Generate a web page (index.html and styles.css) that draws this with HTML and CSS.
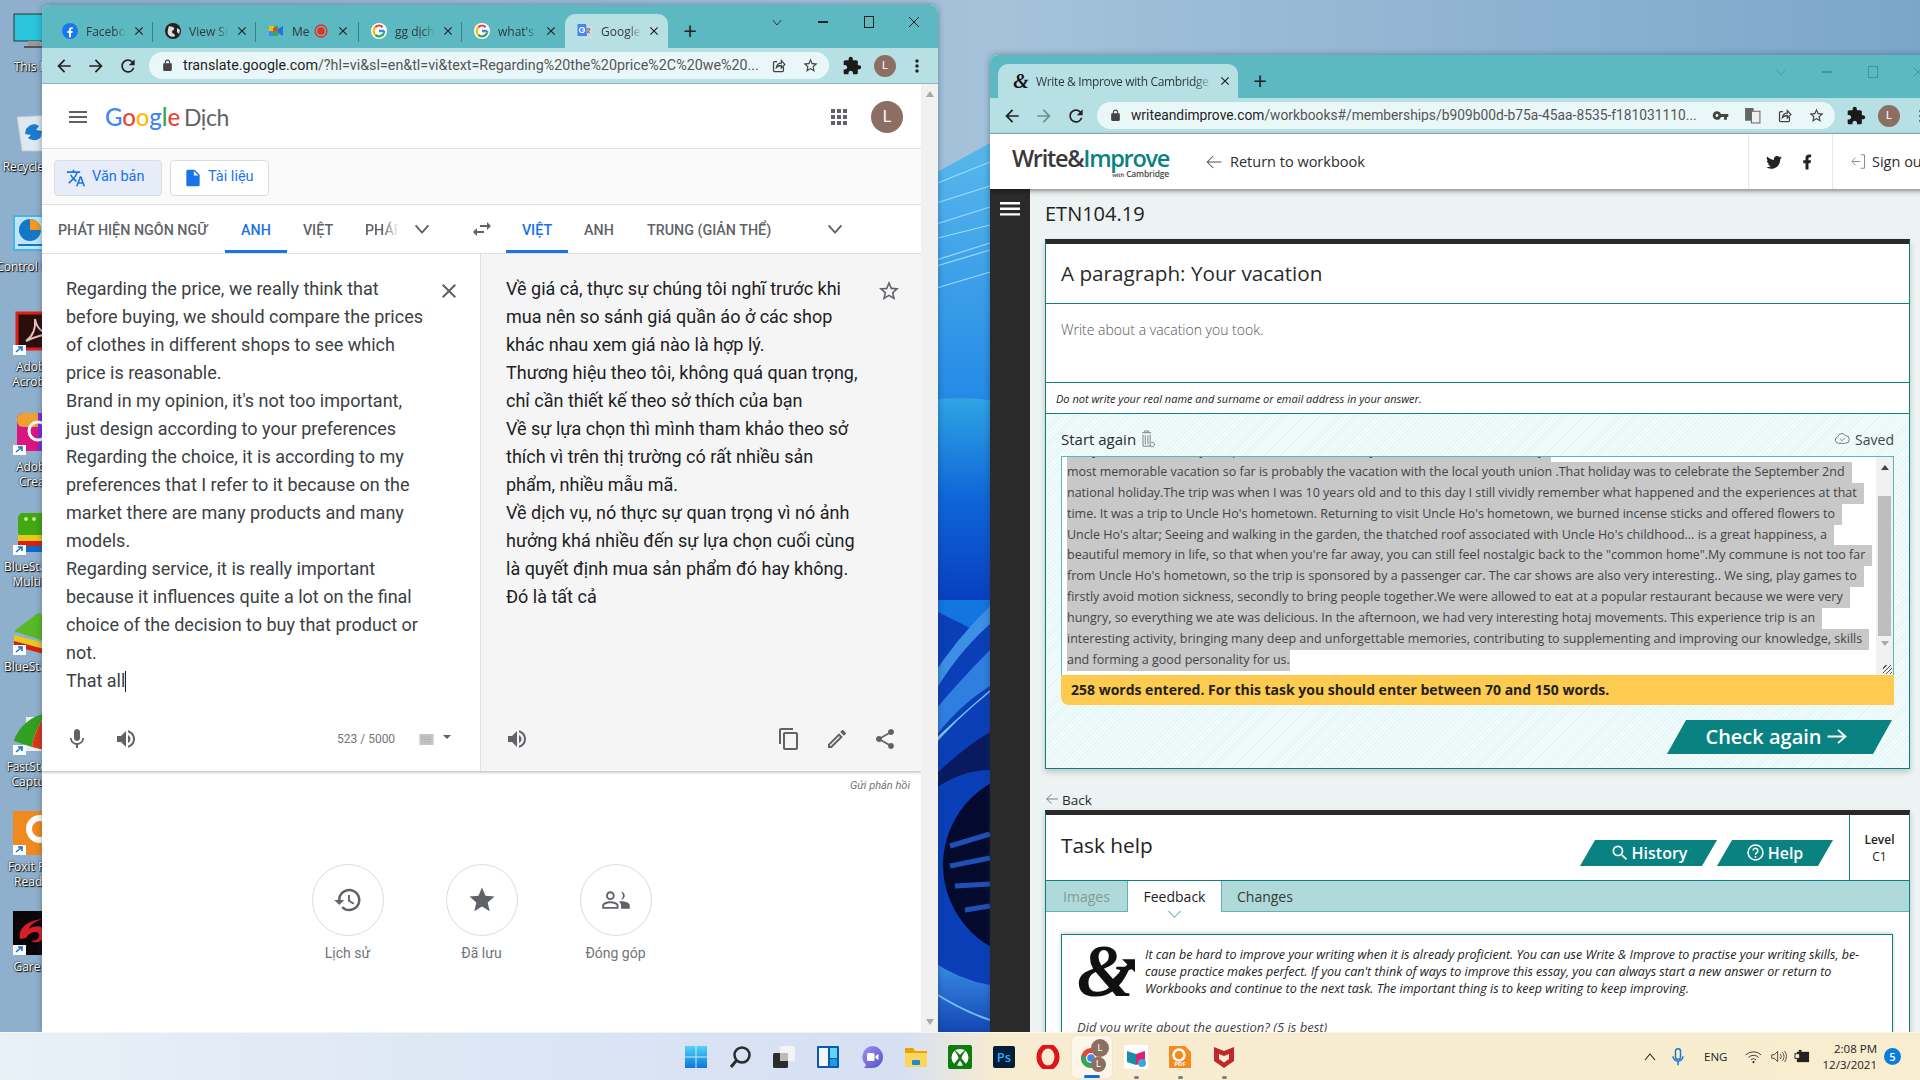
FILE: index.html
```html
<!DOCTYPE html>
<html lang="vi">
<head>
<meta charset="utf-8">
<title>Desktop</title>
<link rel="stylesheet" href="styles.css">
</head>
<body>
<svg class="defs" width="0" height="0" aria-hidden="true">
  <defs>
    <linearGradient id="gStart" x1="0" y1="0" x2="0" y2="1"><stop offset="0" stop-color="#4fd4fa"/><stop offset="1" stop-color="#0a78d4"/></linearGradient>
    <linearGradient id="gChat" x1="0" y1="0" x2="1" y2="1"><stop offset="0" stop-color="#a58cf0"/><stop offset="1" stop-color="#4f55c8"/></linearGradient>
    <linearGradient id="wpBlue1" x1="0" y1="0" x2="0" y2="1"><stop offset="0" stop-color="#58b8ec"/><stop offset=".35" stop-color="#1880e4"/><stop offset="1" stop-color="#0456d8"/></linearGradient>
    <linearGradient id="wpBlue2" x1="0" y1="0" x2="0" y2="1"><stop offset="0" stop-color="#2fa4e4"/><stop offset=".5" stop-color="#0e66d8"/><stop offset="1" stop-color="#083fc0"/></linearGradient>
    <linearGradient id="wpBlue3" x1="0" y1="0" x2="0" y2="1"><stop offset="0" stop-color="#3a8ee6"/><stop offset="1" stop-color="#0f3fae"/></linearGradient>
    <symbol id="i-back" viewBox="0 0 24 24"><path d="M20 11H7.83l5.59-5.59L12 4l-8 8 8 8 1.41-1.41L7.83 13H20v-2z"/></symbol>
    <symbol id="i-forward" viewBox="0 0 24 24"><path d="M12 4l-1.41 1.41L16.17 11H4v2h12.17l-5.58 5.59L12 20l8-8z"/></symbol>
    <symbol id="i-reload" viewBox="0 0 24 24"><path d="M17.65 6.35A7.958 7.958 0 0012 4c-4.42 0-7.99 3.58-7.99 8s3.57 8 7.99 8c3.73 0 6.84-2.55 7.73-6h-2.08A5.99 5.99 0 0112 18c-3.31 0-6-2.69-6-6s2.69-6 6-6c1.66 0 3.14.69 4.22 1.78L13 11h7V4l-2.35 2.35z"/></symbol>
    <symbol id="i-lock" viewBox="0 0 24 24"><path d="M18 8h-1V6c0-2.76-2.24-5-5-5S7 3.24 7 6v2H6c-1.1 0-2 .9-2 2v10c0 1.1.9 2 2 2h12c1.1 0 2-.9 2-2V10c0-1.1-.9-2-2-2zM9 6c0-1.66 1.34-3 3-3s3 1.34 3 3v2H9V6z"/></symbol>
    <symbol id="i-star-o" viewBox="0 0 24 24"><path d="M22 9.24l-7.19-.62L12 2 9.19 8.63 2 9.24l5.46 4.73L5.82 21 12 17.27 18.18 21l-1.63-7.03L22 9.24zM12 15.4l-3.76 2.27 1-4.28-3.32-2.88 4.38-.38L12 6.1l1.71 4.04 4.38.38-3.32 2.88 1 4.28L12 15.4z"/></symbol>
    <symbol id="i-star" viewBox="0 0 24 24"><path d="M12 17.27L18.18 21l-1.64-7.03L22 9.24l-7.19-.61L12 2 9.19 8.63 2 9.24l5.46 4.73L5.82 21z"/></symbol>
    <symbol id="i-puzzle" viewBox="0 0 24 24"><path d="M20.5 11H19V7c0-1.1-.9-2-2-2h-4V3.5C13 2.12 11.88 1 10.5 1S8 2.12 8 3.5V5H4c-1.1 0-1.99.9-1.99 2v3.8H3.5c1.49 0 2.7 1.21 2.7 2.7s-1.21 2.7-2.7 2.7H2V20c0 1.1.9 2 2 2h3.8v-1.5c0-1.49 1.21-2.7 2.7-2.7 1.49 0 2.7 1.21 2.7 2.7V22H17c1.1 0 2-.9 2-2v-4h1.5c1.38 0 2.5-1.12 2.5-2.5S21.88 11 20.5 11z"/></symbol>
    <symbol id="i-dots" viewBox="0 0 24 24"><path d="M12 8c1.1 0 2-.9 2-2s-.9-2-2-2-2 .9-2 2 .9 2 2 2zm0 2c-1.1 0-2 .9-2 2s.9 2 2 2 2-.9 2-2-.9-2-2-2zm0 6c-1.1 0-2 .9-2 2s.9 2 2 2 2-.9 2-2-.9-2-2-2z"/></symbol>
    <symbol id="i-share-box" viewBox="0 0 24 24"><path fill="none" stroke="currentColor" stroke-width="1.8" d="M19 14v5a1.5 1.5 0 01-1.5 1.5h-11A1.5 1.5 0 015 19V8a1.5 1.5 0 011.5-1.5H10M9 15c.5-4 3-6.5 7-6.5V5l5 5.5-5 5V12c-3 0-5 1-7 3z"/></symbol>
    <symbol id="i-menu" viewBox="0 0 24 24"><path d="M3 18h18v-2H3v2zm0-5h18v-2H3v2zm0-7v2h18V6H3z"/></symbol>
    <symbol id="i-apps" viewBox="0 0 24 24"><path d="M4 8h4V4H4v4zm6 12h4v-4h-4v4zm-6 0h4v-4H4v4zm0-6h4v-4H4v4zm6 0h4v-4h-4v4zm6-10v4h4V4h-4zm-6 4h4V4h-4v4zm6 6h4v-4h-4v4zm0 6h4v-4h-4v4z"/></symbol>
    <symbol id="i-translate" viewBox="0 0 24 24"><path d="M12.87 15.07l-2.54-2.51.03-.03c1.74-1.94 2.98-4.17 3.71-6.53H17V4h-7V2H8v2H1v1.99h11.17C11.5 7.92 10.44 9.75 9 11.35 8.07 10.32 7.3 9.19 6.69 8h-2c.73 1.63 1.73 3.17 2.98 4.56l-5.09 5.02L4 19l5-5 3.11 3.11.76-2.04zM18.5 10h-2L12 22h2l1.12-3h4.75L21 22h2l-4.5-12zm-2.62 7l1.62-4.33L19.12 17h-3.24z"/></symbol>
    <symbol id="i-doc" viewBox="0 0 24 24"><path d="M14 2H6c-1.1 0-1.99.9-1.99 2L4 20c0 1.1.89 2 1.99 2H18c1.1 0 2-.9 2-2V8l-6-6zm-1 7V3.5L18.5 9H13z"/></symbol>
    <symbol id="i-chev" viewBox="0 0 24 24"><path d="M5 8l7 8 7-8" fill="none" stroke="currentColor" stroke-width="2"/></symbol>
    <symbol id="i-swap" viewBox="0 0 24 24"><path d="M6.99 11L3 15l3.99 4v-3H14v-2H6.99v-3zM21 9l-3.99-4v3H10v2h7.01v3L21 9z"/></symbol>
    <symbol id="i-close" viewBox="0 0 24 24"><path d="M19 6.41L17.59 5 12 10.59 6.41 5 5 6.41 10.59 12 5 17.59 6.41 19 12 13.41 17.59 19 19 17.59 13.41 12z"/></symbol>
    <symbol id="i-mic" viewBox="0 0 24 24"><path d="M12 14c1.66 0 2.99-1.34 2.99-3L15 5c0-1.66-1.34-3-3-3S9 3.34 9 5v6c0 1.66 1.34 3 3 3zm5.3-3c0 3-2.54 5.1-5.3 5.1S6.7 14 6.7 11H5c0 3.41 2.72 6.23 6 6.72V21h2v-3.28c3.28-.48 6-3.3 6-6.72h-1.7z"/></symbol>
    <symbol id="i-vol" viewBox="0 0 24 24"><path d="M3 9v6h4l5 5V4L7 9H3zm13.5 3c0-1.77-1.02-3.29-2.5-4.03v8.05c1.48-.73 2.5-2.25 2.5-4.02zM14 3.23v2.06c2.89.86 5 3.54 5 6.71s-2.11 5.85-5 6.71v2.06c4.01-.91 7-4.49 7-8.77s-2.99-7.86-7-8.770z"/></symbol>
    <symbol id="i-copy" viewBox="0 0 24 24"><path d="M16 1H4c-1.1 0-2 .9-2 2v14h2V3h12V1zm3 4H8c-1.1 0-2 .9-2 2v14c0 1.1.9 2 2 2h11c1.1 0 2-.9 2-2V7c0-1.1-.9-2-2-2zm0 16H8V7h11v14z"/></symbol>
    <symbol id="i-edit" viewBox="0 0 24 24"><path d="M14.06 9.02l.92.92L5.92 19H5v-.92l9.06-9.06M17.66 3c-.25 0-.51.1-.7.29l-1.83 1.83 3.75 3.75 1.83-1.83c.39-.39.39-1.02 0-1.41l-2.34-2.34c-.2-.2-.45-.29-.71-.29zm-3.6 3.19L3 17.25V21h3.75L17.81 9.94l-3.75-3.75z"/></symbol>
    <symbol id="i-share" viewBox="0 0 24 24"><path d="M18 16.08c-.76 0-1.44.3-1.96.77L8.91 12.7c.05-.23.09-.46.09-.7s-.04-.47-.09-.7l7.05-4.11c.54.5 1.25.81 2.04.81 1.66 0 3-1.34 3-3s-1.34-3-3-3-3 1.34-3 3c0 .24.04.47.09.7L8.04 9.81C7.5 9.31 6.79 9 6 9c-1.66 0-3 1.34-3 3s1.34 3 3 3c.79 0 1.5-.31 2.04-.81l7.12 4.16c-.05.21-.08.43-.08.65 0 1.61 1.31 2.92 2.92 2.92 1.61 0 2.92-1.31 2.92-2.92s-1.31-2.92-2.92-2.92z"/></symbol>
    <symbol id="i-history" viewBox="0 0 24 24"><path d="M13 3c-4.97 0-9 4.03-9 9H1l3.89 3.89.07.14L9 12H6c0-3.87 3.13-7 7-7s7 3.13 7 7-3.13 7-7 7c-1.93 0-3.68-.79-4.94-2.06l-1.42 1.42C8.27 19.99 10.51 21 13 21c4.97 0 9-4.03 9-9s-4.03-9-9-9zm-1 5v5l4.28 2.54.72-1.21-3.5-2.08V8H12z"/></symbol>
    <symbol id="i-people" viewBox="0 0 24 24"><path d="M16.5 13c-.6 0-1.4.1-2.2.3 1 .7 1.7 1.7 1.7 2.95V19h7v-2.75c0-2.17-4.33-3.25-6.5-3.25zM7.5 13C5.33 13 1 14.08 1 16.25V19h13v-2.75C14 14.08 9.67 13 7.5 13zm5 4.5h-10v-1.25c0-.54 2.56-1.75 5-1.75s5 1.21 5 1.75v1.25zM7.5 12c1.93 0 3.5-1.57 3.5-3.5S9.43 5 7.5 5 4 6.57 4 8.5 5.57 12 7.5 12zm0-5.5c1.1 0 2 .9 2 2s-.9 2-2 2-2-.9-2-2 .9-2 2-2zm8.5 5.4c1.7-.3 3-1.7 3-3.4 0-1.7-1.3-3.2-3-3.4.9.9 1.5 2.1 1.5 3.4s-.6 2.5-1.5 3.4z"/></symbol>
    <symbol id="i-search" viewBox="0 0 24 24"><path d="M15.5 14h-.79l-.28-.27A6.471 6.471 0 0016 9.5 6.5 6.5 0 109.5 16c1.61 0 3.09-.59 4.23-1.57l.27.28v.79l5 4.99L20.49 19l-4.99-5zm-6 0C7.01 14 5 11.99 5 9.5S7.01 5 9.5 5 14 7.01 14 9.5 11.99 14 9.5 14z"/></symbol>
    <symbol id="i-twitter" viewBox="0 0 24 24"><path d="M22.46 6c-.77.35-1.6.58-2.46.69.88-.53 1.56-1.37 1.88-2.38-.83.5-1.75.85-2.72 1.05C18.37 4.5 17.26 4 16 4c-2.35 0-4.27 1.92-4.27 4.29 0 .34.04.67.11.98C8.28 9.09 5.11 7.38 3 4.79c-.37.63-.58 1.37-.58 2.15 0 1.49.75 2.81 1.91 3.56-.71 0-1.37-.2-1.95-.5v.03c0 2.08 1.48 3.82 3.44 4.21a4.22 4.22 0 01-1.93.07 4.28 4.28 0 004 2.98 8.521 8.521 0 01-5.33 1.84c-.34 0-.68-.02-1.02-.06C3.44 20.29 5.7 21 8.12 21 16 21 20.33 14.46 20.33 8.79c0-.19 0-.37-.01-.56.84-.6 1.56-1.36 2.14-2.23z"/></symbol>
    <symbol id="i-fb" viewBox="0 0 24 24"><path d="M14 13.5h2.5l1-4H14v-2c0-1.03 0-2 2-2h1.5V2.14c-.326-.043-1.557-.14-2.857-.14C11.928 2 10 3.657 10 6.7v2.8H7v4h3V22h4v-8.5z"/></symbol>
    <symbol id="i-key" viewBox="0 0 24 24"><path d="M12.65 10A5.99 5.99 0 007 6c-3.31 0-6 2.69-6 6s2.69 6 6 6a5.99 5.99 0 005.65-4H17v4h4v-4h2v-4H12.65zM7 14c-1.1 0-2-.9-2-2s.9-2 2-2 2 .9 2 2-.9 2-2 2z"/></symbol>
    <symbol id="i-larrow" viewBox="0 0 24 24"><path d="M22 12H3M11 4l-8 8 8 8" fill="none" stroke="currentColor" stroke-width="1.4"/></symbol>
    <symbol id="i-g" viewBox="0 0 24 24"><circle cx="12" cy="12" r="12" fill="#fff"/><path d="M20 12h-8" stroke="#4285f4" stroke-width="3.4" fill="none"/><path d="M19.700 14.500A8 8 0 0 1 6.500 17.800" stroke="#34a853" stroke-width="3.4" fill="none"/><path d="M6.500 17.800A8 8 0 0 1 6.500 6.200" stroke="#fbbc05" stroke-width="3.4" fill="none"/><path d="M6.500 6.200A8 8 0 0 1 17.500 6.200" stroke="#ea4335" stroke-width="3.4" fill="none"/><path d="M20 12a8 8 0 0 1-.3 2.500" stroke="#4285f4" stroke-width="3.4" fill="none"/></symbol>
    <symbol id="i-gmeet" viewBox="0 0 16 16"><path d="M1 3h9v10H1z" fill="#34a853"/><path d="M1 3h5v5H1z" fill="#fbbc05"/><path d="M1 8h4v5H1z" fill="#4285f4"/><path d="M5 5h5v3H5z" fill="#ea4335"/><path d="M10 6l5-3v10l-5-3z" fill="#1a73e8"/></symbol>
    <symbol id="i-gtrans" viewBox="0 0 16 16"><path d="M6 3h9.500v12.500H6z" fill="#d4d8de"/><path d="M9 6h4M11 5v1M10 10c1.500-1 2.500-2.500 3-4M10 7c.5 1.500 1.500 2.500 3 3" stroke="#666" stroke-width=".9" fill="none"/><path d="M.5 1h8.500l1 12H.5z" fill="#4285f4"/><circle cx="5" cy="7" r="2.500" fill="none" stroke="#fff" stroke-width="1.200"/><path d="M5 7h2.600" stroke="#fff" stroke-width="1.200"/></symbol>
  </defs>
</svg>

<svg class="wallpaper" viewBox="0 0 1920 1080" preserveAspectRatio="none" aria-hidden="true">
  <defs><linearGradient id="wpBase" x1="0" y1="0" x2="1" y2="0"><stop offset="0" stop-color="#8fb1ce"/><stop offset=".52" stop-color="#a4c2da"/><stop offset="1" stop-color="#7ba6ca"/></linearGradient></defs>
  <rect width="1920" height="1080" fill="url(#wpBase)"/>
  <path d="M0 0H42V1040H0z" fill="#8fb0cd"/>
  <path d="M930 176 L990 143 V1040 H930Z" fill="url(#wpBlue1)"/>
  <path d="M930 186 L990 162 M930 205 L990 186 M930 226 L990 207 M930 240 L990 225 M930 262 L990 243 M930 268 L990 250 M930 290 L990 272" stroke="#9edcf8" stroke-width="1.2" fill="none"/>
  <path d="M930 400 Q960 396 990 400 V600 L930 600Z" fill="url(#wpBlue2)"/>
  <path d="M930 608 L970 628 L990 616 V1040 H930Z" fill="#0b3fb8"/>
  <path d="M930 680 Q955 640 990 606 V624 Q955 655 930 700Z" fill="#3c8fe4"/>
  <path d="M930 716 Q960 680 990 650 V686 Q955 708 930 744Z" fill="#2f7fe0"/>
  <path d="M930 744 Q955 720 990 690 V692 Q955 720 930 750Z" fill="#79c8f4"/>
  <path d="M930 780 Q960 750 990 732 V770 Q960 770 930 792Z" fill="#0a1a60"/>
  <ellipse cx="1040" cy="865" rx="97" ry="95" fill="#030a2e"/>
  <path d="M950 846 L990 834 M950 866 L990 858 M955 886 L990 884 M965 910 L990 906" stroke="#1e50b8" stroke-width="5" fill="none"/>
  <path d="M930 960 Q960 980 990 985 V1040 H930Z" fill="url(#wpBlue3)"/>
  <path d="M930 990 Q960 1010 990 1020" stroke="#74bcf0" stroke-width="2" fill="none"/>
</svg>

<nav class="desktop-icons">
  <div class="d-icon">
    <svg class="d-glyph" viewBox="0 0 44 44"><rect x="2" y="3" width="40" height="27" fill="#2bc4dc" stroke="#333" stroke-width="1"/><rect x="16" y="30" width="12" height="5" fill="#999"/><rect x="12" y="35" width="20" height="2" fill="#555"/></svg>
    <span class="d-label">This PC</span>
  </div>
  <div class="d-icon">
    <svg class="d-glyph" viewBox="0 0 44 44"><path d="M5 6l34-2-4 36H10z" fill="#dfe8ef" stroke="#b8c6d2"/><path d="M14 18c4-5 9-6 13-3l-3 4 6 1-1 6c-3 4-9 4-13 1l3-3-6-1z" fill="#1a7cd0"/></svg>
    <span class="d-label">Recycle Bin</span>
  </div>
  <div class="d-icon">
    <svg class="d-glyph" viewBox="0 0 44 44"><rect x="1" y="4" width="42" height="36" fill="#45b4ea"/><rect x="3" y="6" width="38" height="32" fill="#bfe6f8"/><circle cx="18" cy="19" r="11" fill="#1477c8"/><path d="M18 8a11 11 0 0111 11H18z" fill="#f09a20"/><path d="M6 34h32" stroke="#1477c8" stroke-width="2"/></svg>
    <span class="d-label">Control Panel</span>
  </div>
  <div class="d-icon">
    <svg class="d-glyph" viewBox="0 0 44 44"><rect x="5" y="2" width="38" height="36" fill="#2a0d0d" stroke="#e02010" stroke-width="3"/><path d="M14 30c6-4 10-12 9-22 2 10 7 14 16 15-8 0-14 2-25 7z" fill="none" stroke="#e8c0b8" stroke-width="2"/><rect x="1" y="34" width="13" height="10" fill="#fff"/><path d="M4 41l6-5M6 36h4v4" stroke="#1a70d0" fill="none" stroke-width="1.6"/></svg>
    <span class="d-label">Adobe<br>Acrobat</span>
  </div>
  <div class="d-icon">
    <svg class="d-glyph" viewBox="0 0 44 44"><rect x="5" y="2" width="38" height="38" rx="6" fill="#d9157e"/><rect x="5" y="2" width="38" height="14" rx="6" fill="#f0a030"/><rect x="26" y="2" width="17" height="38" fill="#7a2be0"/><circle cx="26" cy="20" r="9" fill="none" stroke="#fff" stroke-width="3"/><rect x="1" y="34" width="13" height="10" fill="#fff"/><path d="M4 41l6-5M6 36h4v4" stroke="#1a70d0" fill="none" stroke-width="1.6"/></svg>
    <span class="d-label">Adobe<br>Creat</span>
  </div>
  <div class="d-icon">
    <svg class="d-glyph" viewBox="0 0 44 44"><rect x="6" y="2" width="36" height="24" rx="5" fill="#42a810"/><rect x="6" y="24" width="36" height="6" fill="#e8c818"/><rect x="6" y="30" width="36" height="5" fill="#d82010"/><rect x="6" y="35" width="36" height="6" fill="#1068c8"/><circle cx="14" cy="8" r="2" fill="#bfe898"/><circle cx="22" cy="8" r="2" fill="#bfe898"/><rect x="1" y="34" width="13" height="10" fill="#fff"/><path d="M4 41l6-5M6 36h4v4" stroke="#1a70d0" fill="none" stroke-width="1.6"/></svg>
    <span class="d-label">BlueStacks<br>Multi-In</span>
  </div>
  <div class="d-icon">
    <svg class="d-glyph" viewBox="0 0 44 44"><path d="M2 20L26 2l16 4-10 24z" fill="#58b828"/><path d="M2 24l30 8 10-4v5L32 38 2 30z" fill="#e8c818"/><path d="M2 30l30 8 10-4v4l-10 5-30-8z" fill="#d82010"/><rect x="1" y="34" width="13" height="10" fill="#fff"/><path d="M4 41l6-5M6 36h4v4" stroke="#1a70d0" fill="none" stroke-width="1.6"/></svg>
    <span class="d-label">BlueStacks</span>
  </div>
  <div class="d-icon">
    <svg class="d-glyph" viewBox="0 0 44 44"><rect x="14" y="6" width="26" height="34" fill="#eee"/><path d="M2 30C6 16 20 4 36 2 26 12 22 24 20 36z" fill="#30a020"/><path d="M20 36C22 22 28 10 36 2c2 14 2 26 0 38z" fill="#d83818"/><rect x="1" y="34" width="13" height="10" fill="#fff"/><path d="M4 41l6-5M6 36h4v4" stroke="#1a70d0" fill="none" stroke-width="1.6"/></svg>
    <span class="d-label">FastStone<br>Capture</span>
  </div>
  <div class="d-icon">
    <svg class="d-glyph" viewBox="0 0 44 44"><rect x="1" y="0" width="42" height="44" fill="#f08a1e"/><circle cx="28" cy="18" r="11" fill="none" stroke="#fff" stroke-width="6"/><rect x="1" y="34" width="13" height="10" fill="#fff"/><path d="M4 41l6-5M6 36h4v4" stroke="#1a70d0" fill="none" stroke-width="1.6"/></svg>
    <span class="d-label">Foxit PDF<br>Reader</span>
  </div>
  <div class="d-icon">
    <svg class="d-glyph" viewBox="0 0 44 44"><rect x="1" y="0" width="42" height="44" fill="#0c0508"/><path d="M8 28c-2-10 6-18 22-20-8 3-12 6-13 10 5-4 14-4 16 2 2 8-8 14-14 10 6 0 9-3 8-7-2-4-10-2-13 4z" fill="#d81e24"/><rect x="1" y="34" width="13" height="10" fill="#fff"/><path d="M4 41l6-5M6 36h4v4" stroke="#1a70d0" fill="none" stroke-width="1.6"/></svg>
    <span class="d-label">Garena</span>
  </div>
</nav>

<section class="win win-left">
  <header class="tabstrip">
    <div class="tab"><svg class="fav" viewBox="0 0 16 16"><circle cx="8" cy="8" r="8" fill="#1877f2"/><use href="#i-fb" x="2" y="2.5" width="12" height="13.5" fill="#fff"/></svg><span class="tab-title">Facebook</span><svg class="tab-x"><use href="#i-close"/></svg></div>
    <div class="tab"><svg class="fav" viewBox="0 0 16 16"><circle cx="8" cy="8" r="8" fill="#222"/><path d="M4 3c2 1 4 0 5 2s-2 2-2 4 3 1 3 4c-3 2-6 0-7-2s0-5 1-8zM12 5l3 2-1 4-2-2z" fill="#ddd"/></svg><span class="tab-title">View Source</span><svg class="tab-x"><use href="#i-close"/></svg></div>
    <div class="tab"><svg class="fav"><use href="#i-gmeet"/></svg><span class="tab-title tab-short">Me</span><svg class="rec" viewBox="0 0 14 14"><circle cx="7" cy="7" r="6" fill="none" stroke="#e53020" stroke-width="1.3"/><circle cx="7" cy="7" r="3.8" fill="#e53020"/></svg><svg class="tab-x"><use href="#i-close"/></svg></div>
    <div class="tab"><svg class="fav"><use href="#i-g"/></svg><span class="tab-title">gg dịch</span><svg class="tab-x"><use href="#i-close"/></svg></div>
    <div class="tab"><svg class="fav"><use href="#i-g"/></svg><span class="tab-title">what's it</span><svg class="tab-x"><use href="#i-close"/></svg></div>
    <div class="tab tab-active"><svg class="fav"><use href="#i-gtrans"/></svg><span class="tab-title">Google Dịch</span><svg class="tab-x"><use href="#i-close"/></svg></div>
    <span class="newtab">+</span>
    <div class="win-ctrl">
      <svg class="ctrl-chev" viewBox="0 0 12 8"><path d="M1 1l5 6 5-6" fill="none" stroke="currentColor"/></svg>
      <span class="ctrl-min"></span>
      <span class="ctrl-max"></span>
      <svg class="ctrl-close" viewBox="0 0 12 12"><path d="M1 1l10 10M11 1L1 11" stroke="currentColor" stroke-width="1"/></svg>
    </div>
  </header>
  <div class="toolbar">
    <svg class="tb-btn"><use href="#i-back"/></svg>
    <svg class="tb-btn"><use href="#i-forward"/></svg>
    <svg class="tb-btn"><use href="#i-reload"/></svg>
    <div class="omnibox">
      <svg class="omni-lock"><use href="#i-lock"/></svg>
      <span class="omni-url"><b>translate.google.com</b>/?hl=vi&amp;sl=en&amp;tl=vi&amp;text=Regarding%20the%20price%2C%20we%20...</span>
      <svg class="omni-ic"><use href="#i-share-box"/></svg>
      <svg class="omni-ic omni-last"><use href="#i-star-o"/></svg>
    </div>
    <svg class="tb-ext"><use href="#i-puzzle"/></svg>
    <span class="avatar-sm">L</span>
    <svg class="tb-dots"><use href="#i-dots"/></svg>
  </div>
  <div class="page">
    <main class="gt">
      <header class="gt-head">
        <svg class="gt-burger"><use href="#i-menu"/></svg>
        <span class="gt-logo"><span class="c-b">G</span><span class="c-r">o</span><span class="c-y">o</span><span class="c-b">g</span><span class="c-g">l</span><span class="c-r">e</span> <span class="gt-dich">Dịch</span></span>
        <svg class="gt-apps"><use href="#i-apps"/></svg>
        <span class="avatar-lg">L</span>
      </header>
      <div class="gt-modes">
        <span class="mode mode-on"><svg class="mode-ic"><use href="#i-translate"/></svg>Văn bản</span>
        <span class="mode mode-off"><svg class="mode-ic-doc"><use href="#i-doc"/></svg>Tài liệu</span>
      </div>
      <div class="gt-langs">
        <div class="langs-src">
          <span class="lang lang-detect">PHÁT HIỆN NGÔN NGỮ</span>
          <span class="lang lang-on lang-anh">ANH</span>
          <span class="lang lang-cell">VIỆT</span>
          <span class="lang lang-fade">PHÁP</span>
          <svg class="lang-chev"><use href="#i-chev"/></svg>
        </div>
        <svg class="lang-swap"><use href="#i-swap"/></svg>
        <div class="langs-dst">
          <span class="lang lang-on lang-anh">VIỆT</span>
          <span class="lang lang-cell">ANH</span>
          <span class="lang lang-zh">TRUNG (GIẢN THỂ)</span>
          <svg class="lang-chev2"><use href="#i-chev"/></svg>
        </div>
      </div>
      <div class="gt-panels">
        <div class="pane pane-src">
          <div class="pane-body">
            <p class="pane-text">Regarding the price, we really think that<br>before buying, we should compare the prices<br>of clothes in different shops to see which<br>price is reasonable.<br>Brand in my opinion, it's not too important,<br>just design according to your preferences<br>Regarding the choice, it is according to my<br>preferences that I refer to it because on the<br>market there are many products and many<br>models.<br>Regarding service, it is really important<br>because it influences quite a lot on the final<br>choice of the decision to buy that product or<br>not.<br>That all<span class="caret"></span></p>
            <svg class="pane-x"><use href="#i-close"/></svg>
          </div>
          <div class="pane-foot">
            <svg class="foot-ic foot-mic"><use href="#i-mic"/></svg>
            <svg class="foot-ic foot-vol"><use href="#i-vol"/></svg>
            <span class="counter">523 / 5000</span>
            <svg class="kbd" viewBox="0 0 18 14"><rect width="18" height="14" fill="#c4c4c4"/><path d="M2 4h14M2 7h14M4 10h10" stroke="#9a9a9a" stroke-dasharray="1 1"/></svg>
            <span class="kbd-caret"></span>
          </div>
        </div>
        <div class="pane pane-dst">
          <div class="pane-body">
            <p class="pane-text pane-text-dst">Về giá cả, thực sự chúng tôi nghĩ trước khi<br>mua nên so sánh giá quần áo ở các shop<br>khác nhau xem giá nào là hợp lý.<br>Thương hiệu theo tôi, không quá quan trọng,<br>chỉ cần thiết kế theo sở thích của bạn<br>Về sự lựa chọn thì mình tham khảo theo sở<br>thích vì trên thị trường có rất nhiều sản<br>phẩm, nhiều mẫu mã.<br>Về dịch vụ, nó thực sự quan trọng vì nó ảnh<br>hưởng khá nhiều đến sự lựa chọn cuối cùng<br>là quyết định mua sản phẩm đó hay không.<br>Đó là tất cả</p>
            <svg class="pane-star"><use href="#i-star-o"/></svg>
          </div>
          <div class="pane-foot pane-foot-dst">
            <svg class="foot-ic foot-vol2"><use href="#i-vol"/></svg>
            <svg class="foot-ic foot-copy"><use href="#i-copy"/></svg>
            <svg class="foot-ic foot-edit"><use href="#i-edit"/></svg>
            <svg class="foot-ic foot-share"><use href="#i-share"/></svg>
          </div>
        </div>
      </div>
      <div class="gt-below">
        <p class="gt-feedback">Gửi phản hồi</p>
        <div class="gt-hub">
          <div class="hub"><span class="hub-circle"><svg class="hub-ic"><use href="#i-history"/></svg></span><span class="hub-label">Lịch sử</span></div>
          <div class="hub"><span class="hub-circle"><svg class="hub-ic"><use href="#i-star"/></svg></span><span class="hub-label">Đã lưu</span></div>
          <div class="hub"><span class="hub-circle"><svg class="hub-ic"><use href="#i-people"/></svg></span><span class="hub-label">Đóng góp</span></div>
        </div>
      </div>
    </main>
    <div class="vscroll"><span class="sb-up"></span><span class="sb-down"></span></div>
  </div>
</section>

<section class="win win-right">
  <header class="tabstrip tabstrip-r">
    <div class="tab tab-active tab-wide"><span class="amp-fav">&amp;</span><span class="tab-title tab-title-wide">Write &amp; Improve with Cambridge</span><svg class="tab-x"><use href="#i-close"/></svg></div>
    <span class="newtab">+</span>
    <div class="win-ctrl win-ctrl-dim">
      <svg class="ctrl-chev" viewBox="0 0 12 8"><path d="M1 1l5 6 5-6" fill="none" stroke="currentColor"/></svg>
      <span class="ctrl-min"></span>
      <span class="ctrl-max"></span>
      <svg class="ctrl-close" viewBox="0 0 12 12"><path d="M1 1l10 10M11 1L1 11" stroke="currentColor" stroke-width="1"/></svg>
    </div>
  </header>
  <div class="toolbar">
    <svg class="tb-btn"><use href="#i-back"/></svg>
    <svg class="tb-btn tb-dim"><use href="#i-forward"/></svg>
    <svg class="tb-btn"><use href="#i-reload"/></svg>
    <div class="omnibox omnibox-r">
      <svg class="omni-lock"><use href="#i-lock"/></svg>
      <span class="omni-url omni-url-r"><b>writeandimprove.com</b>/workbooks#/memberships/b909b00d-b75a-45aa-8535-f181031110...</span>
      <svg class="omni-ic"><use href="#i-key"/></svg>
      <svg class="omni-ic omni-tr" viewBox="0 0 16 16"><path d="M1 1h8v12H1z" fill="#666"/><path d="M7 4h8v11H7z" fill="#eee" stroke="#666"/></svg>
      <svg class="omni-ic"><use href="#i-share-box"/></svg>
      <svg class="omni-ic omni-last"><use href="#i-star-o"/></svg>
    </div>
    <svg class="tb-ext"><use href="#i-puzzle"/></svg>
    <span class="avatar-sm">L</span>
    <svg class="tb-dots"><use href="#i-dots"/></svg>
  </div>
  <header class="site-head">
    <div class="site-logo">
      <span class="logo-main"><span class="logo-w">Write&amp;</span><span class="logo-i">Improve</span></span>
      <span class="logo-sub"><small>with</small> Cambridge</span>
    </div>
    <a class="site-back"><svg class="site-arrow"><use href="#i-larrow"/></svg>Return to workbook</a>
    <div class="site-social">
      <svg class="soc-ic"><use href="#i-twitter"/></svg>
      <svg class="soc-ic"><use href="#i-fb"/></svg>
    </div>
    <a class="site-out"><svg class="out-ic" viewBox="0 0 20 22"><path d="M12 11H2M6 6l-5 5 5 5M13 2h5v18h-5" fill="none" stroke="currentColor"/></svg>Sign out</a>
  </header>
  <div class="site-body">
    <aside class="site-side"><svg class="side-burger" viewBox="0 0 20 14"><path d="M0 0h20v2.4H0zM0 5.6h20V8H0zM0 11.2h20v2.4H0z" fill="#fff"/></svg></aside>
    <div class="site-main">
      <h1 class="etn">ETN104.19</h1>
      <article class="card card-task">
        <h2 class="card-title">A paragraph: Your vacation</h2>
        <p class="prompt">Write about a vacation you took.</p>
        <p class="note">Do not write your real name and surname or email address in your answer.</p>
        <div class="essay">
          <div class="essay-top">
            <span class="start">Start again<svg class="trash" viewBox="0 0 16 20"><path d="M2 3h10M5 3V1h4v2M3 5v13h8V5M5.5 6v10M8.500 6v10" fill="none" stroke="#777"/><path d="M12 14a2.500 2.500 0 11-1 3" fill="none" stroke="#777"/></svg></span>
            <span class="saved"><svg class="cloud" viewBox="0 0 18 14"><path d="M5 12a4 4 0 01-1-7.800A5 5 0 0113 3a4.500 4.500 0 010 9zM7 7l2 2 3-3" fill="none" stroke="#666"/></svg>Saved</span>
          </div>
          <div class="essay-box">
            <div class="essay-text">
              <span class="sel">Everyone has had many a trip with friends and family in their lives, and for me, my</span>
              <span class="sel">most memorable vacation so far is probably the vacation with the local youth union .That holiday was to celebrate the September 2nd</span>
              <span class="sel">national holiday.The trip was when I was 10 years old and to this day I still vividly remember what happened and the experiences at that</span>
              <span class="sel">time. It was a trip to Uncle Ho's hometown. Returning to visit Uncle Ho's hometown, we burned incense sticks and offered flowers to</span>
              <span class="sel">Uncle Ho's altar; Seeing and walking in the garden, the thatched roof associated with Uncle Ho's childhood... is a great happiness, a</span>
              <span class="sel">beautiful memory in life, so that when you're far away, you can still feel nostalgic back to the "common home".My commune is not too far</span>
              <span class="sel">from Uncle Ho's hometown, so the trip is sponsored by a passenger car. The car shows are also very interesting.. We sing, play games to</span>
              <span class="sel">firstly avoid motion sickness, secondly to bring people together.We were allowed to eat at a popular restaurant because we were very</span>
              <span class="sel">hungry, so everything we ate was delicious. In the afternoon, we had very interesting hotaj movements. This experience trip is an</span>
              <span class="sel">interesting activity, bringing many deep and unforgettable memories, contributing to supplementing and improving our knowledge, skills</span>
              <span class="sel sel-end">and forming a good personality for us.</span>
            </div>
            <div class="essay-scroll"><span class="es-up"></span><span class="es-thumb"></span><span class="es-down"></span><span class="es-grip"></span></div>
          </div>
          <div class="wordcount">258 words entered. For this task you should enter between 70 and 150 words.</div>
          <div class="essay-actions"><span class="btn-check">Check again<svg class="btn-arrow" viewBox="0 0 24 18"><path d="M2 9h19M13 2l8 7-8 7" fill="none" stroke="#fff" stroke-width="2"/></svg></span></div>
        </div>
      </article>
      <a class="back-link"><svg class="back-arrow"><use href="#i-larrow"/></svg>Back</a>
      <article class="card card-help">
        <header class="help-head">
          <h2 class="help-title">Task help</h2>
          <div class="help-btns">
            <span class="btn-skew btn-hist"><svg class="btn-ic"><use href="#i-search"/></svg>History</span>
            <span class="btn-skew btn-help"><svg class="btn-q" viewBox="0 0 16 16"><circle cx="8" cy="8" r="7" fill="none" stroke="#fff" stroke-width="1.500"/><path d="M5.800 6.200a2.200 2.200 0 114 1.300c-.8.8-1.800 1-1.800 2.500M8 11.300v1.600" fill="none" stroke="#fff" stroke-width="1.500"/></svg>Help</span>
          </div>
          <div class="help-level"><b>Level</b><span>C1</span></div>
        </header>
        <div class="help-tabs">
          <span class="htab htab-off">Images</span>
          <span class="htab htab-on">Feedback</span>
          <span class="htab">Changes</span>
        </div>
        <div class="help-body">
          <div class="fb-box">
            <div class="fb-row">
              <span class="fb-amp">&amp;<svg class="fb-arrow" viewBox="0 0 24 24"><path d="M2 22L17 7l-5-5h12v12l-4-4L8 24z" fill="#111"/></svg></span>
              <p class="fb-text">It can be hard to improve your writing when it is already proficient. You can use Write &amp; Improve to practise your writing skills, be-<br>cause practice makes perfect. If you can't think of ways to improve this essay, you can always start a new answer or return to<br>Workbooks and continue to the next task. The important thing is to keep writing to keep improving.</p>
            </div>
            <p class="fb-q">Did you write about the question? (5 is best)</p>
          </div>
        </div>
      </article>
    </div>
  </div>
</section>

<footer class="taskbar">
  <div class="tb-apps">
    <span class="app"><svg class="app-ic" viewBox="0 0 24 24"><path d="M1 1h10.500v10.500H1zM12.500 1H23v10.500H12.500zM1 12.500h10.500V23H1zM12.500 12.500H23V23H12.500z" fill="url(#gStart)"/></svg></span>
    <span class="app"><svg class="app-ic" viewBox="0 0 24 24"><circle cx="14" cy="10" r="7.500" fill="none" stroke="#2a2a2a" stroke-width="2.500"/><path d="M8.500 15.500L3 22" stroke="#2a2a2a" stroke-width="3"/></svg></span>
    <span class="app"><svg class="app-ic" viewBox="0 0 24 24"><rect x="8" y="1" width="15" height="15" rx="1.500" fill="#f4f4f4"/><rect x="1" y="8" width="15" height="15" rx="1.500" fill="#2b2b2b"/><rect x="8" y="8" width="8" height="8" fill="#bbb"/></svg></span>
    <span class="app"><svg class="app-ic" viewBox="0 0 24 24"><rect x="1" y="1" width="22" height="22" rx="1" fill="#0f5aa8"/><rect x="3" y="3" width="9" height="18" fill="#f2f6fb"/><rect x="14" y="3" width="7" height="10" fill="#63d4fb"/><rect x="14" y="14" width="7" height="7" fill="#1e9be8"/></svg></span>
    <span class="app"><svg class="app-ic" viewBox="0 0 24 24"><path d="M12 1a11 11 0 110 22H4l2-3A11 11 0 0112 1z" fill="url(#gChat)"/><rect x="7" y="8" width="7.500" height="8" rx="1.500" fill="#fff"/><path d="M15.500 11l3-2v6l-3-2z" fill="#fff"/></svg></span>
    <span class="app"><svg class="app-ic" viewBox="0 0 24 24"><path d="M1 3h8l2 3h12v15a1 1 0 01-1 1H2a1 1 0 01-1-1z" fill="#e8a400"/><rect x="1" y="8" width="22" height="14" rx="1" fill="#fbd65a"/><rect x="8" y="15" width="8" height="5" rx="1" fill="#2088d8"/></svg></span>
    <span class="app"><svg class="app-ic" viewBox="0 0 24 24"><rect x="0" y="0" width="24" height="24" rx="2" fill="#107c10"/><circle cx="12" cy="12.500" r="8.500" fill="#fff"/><path d="M6 5c3 1 6 5 6 5s3-4 6-5c-2 3-4.500 6-4.500 8.500 2 2 4.500 5 5 7H15c-1-2-3-5-3-5s-2 3-3 5H5.500c.5-2 3-5 5-7C10.500 11 8 8 6 5z" fill="#107c10"/></svg></span>
    <span class="app"><span class="ps-ic">Ps</span></span>
    <span class="app"><svg class="app-ic" viewBox="0 0 24 24"><ellipse cx="12" cy="12" rx="9" ry="11" fill="none" stroke="#e0141e" stroke-width="5"/></svg></span>
    <span class="app app-active"><svg class="app-ic" viewBox="0 0 24 24"><circle cx="11" cy="13" r="10" fill="#ea4335"/><path d="M11 13L1.500 10a10 10 0 0012 12.700z" fill="#34a853"/><path d="M11 13l2.500 9.700A10 10 0 0020.500 9z" fill="#fbbc05"/><circle cx="11" cy="13" r="5" fill="#fff"/><circle cx="11" cy="13" r="3.800" fill="#4285f4"/></svg><span class="badge-l badge-l1">L</span><span class="badge-l badge-l2">L</span><span class="run-on"></span></span>
    <span class="app app-run"><svg class="app-ic" viewBox="0 0 24 24"><rect width="24" height="24" rx="2" fill="#fff"/><path d="M3 6l9 3v11l-9-3z" fill="#1590a8"/><path d="M21 6l-9 3v11l9-3z" fill="#e02070"/><circle cx="18" cy="18" r="4" fill="#3aa8d8"/></svg><span class="run-dot"></span></span>
    <span class="app app-run"><svg class="app-ic" viewBox="0 0 24 24"><path d="M1 1h16l6 6v16H1z" fill="#f58b1f"/><circle cx="11" cy="10" r="5.500" fill="none" stroke="#fff" stroke-width="2.500"/><text x="12" y="21" class="pdf-t">PDF</text></svg><span class="run-dot"></span></span>
    <span class="app app-run"><svg class="app-ic" viewBox="0 0 24 24"><path d="M2 2l10 4 10-4v14l-10 7-10-7z" fill="#c0282c"/><path d="M7 9l5 2 5-2v5l-5 3.500L7 14z" fill="#f9eccf"/></svg><span class="run-dot"></span></span>
  </div>
  <div class="tray">
    <svg class="tr-ic tr-up" viewBox="0 0 12 8"><path d="M1 7l5-6 5 6" fill="none" stroke="#222" stroke-width="1.100"/></svg>
    <svg class="tr-ic tr-mic" viewBox="0 0 24 24"><rect x="9" y="2" width="6" height="13" rx="3" fill="none" stroke="#1a78d0" stroke-width="1.800"/><path d="M6 11a6 6 0 0012 0M12 17v5" fill="none" stroke="#1a78d0" stroke-width="1.800"/></svg>
    <span class="tr-lang">ENG</span>
    <svg class="tr-ic tr-wifi" viewBox="0 0 20 16"><path d="M1 5.500a13 13 0 0118 0M4 8.500a8.500 8.500 0 0112 0M7 11.500a4 4 0 016 0" fill="none" stroke="#333" stroke-width="1.100"/><circle cx="10" cy="14" r="1.300" fill="#333"/></svg>
    <svg class="tr-ic tr-vol" viewBox="0 0 20 16"><path d="M2 6v4h3l4 4V2L5 6zM12 5c1.500 1.500 1.500 4.500 0 6M14.500 3c2.500 2.500 2.500 7.500 0 10M17 1.500c3 3 3 10 0 13" fill="none" stroke="#333"/></svg>
    <svg class="tr-ic tr-bat" viewBox="0 0 18 16"><rect x="3" y="3" width="13" height="11" fill="#222"/><rect x="5" y="1" width="3" height="2" fill="#222"/><rect x="1" y="5" width="5" height="5" fill="#f9eccf" stroke="#222"/></svg>
    <div class="clock"><span>2:08 PM</span><span>12/3/2021</span></div>
    <span class="notif">5</span>
  </div>
</footer>
</body>
</html>
```

FILE: styles.css
```css
* { box-sizing: border-box; }
html, body { margin: 0; padding: 0; }
body { position: relative; width: 1920px; height: 1080px; overflow: hidden; background: #8fb0cd; font-family: "Open Sans", "Noto Sans", sans-serif; color: #222; }
svg { display: block; flex: none; fill: currentColor; }
p, h1, h2 { margin: 0; font-weight: 400; }
.defs { position: absolute; }
.wallpaper { position: absolute; left: 0; top: 0; width: 1920px; height: 1080px; }

/* desktop icons */
.desktop-icons { position: absolute; left: -1px; top: 3px; width: 70px; display: flex; flex-direction: column; }
.d-icon { height: 100px; display: flex; flex-direction: column; align-items: center; padding-top: 8px; }
.d-glyph { width: 44px; height: 44px; }
.d-label { margin-top: 4px; font-size: 12px; line-height: 15px; text-align: center; color: #fff; white-space: nowrap; text-shadow: 0 0 2px #000, 1px 1px 1px #000; }

/* windows */
.win { position: absolute; display: flex; flex-direction: column; overflow: hidden; border-radius: 8px 8px 0 0; box-shadow: 0 0 6px rgba(30, 50, 80, .45); background: #fff; }
.win-left { left: 42px; top: 5px; width: 896px; height: 1027px; }
.win-right { left: 990px; top: 55px; width: 960px; height: 977px; }

.tabstrip { height: 43px; flex: none; background: #5db9c1; display: flex; padding: 9px 0 0 8px; position: relative; }
.tabstrip-r { padding-left: 8px; }
.tab { width: 103px; height: 34px; display: flex; align-items: center; padding: 0 0 0 12px; position: relative; font-size: 12px; font-family: "Open Sans", sans-serif; color: #2f3a3c; }
.tab:not(.tab-active)::after { content: ""; position: absolute; right: 0; top: 8px; height: 20px; border-right: 1px solid #3d7d83; }
.tab:nth-child(5)::after { display: none; }
.tab-active { background: #b6e0e4; border-radius: 10px 10px 0 0; }
.tab-wide { width: 240px; }
.fav { width: 16px; height: 16px; margin-right: 8px; }
.tab-title { width: 40px; white-space: nowrap; overflow: hidden; -webkit-mask-image: linear-gradient(90deg, #000 70%, transparent); mask-image: linear-gradient(90deg, #000 70%, transparent); }
.tab-short { width: 18px; -webkit-mask-image: none; mask-image: none; }
.rec { width: 14px; height: 14px; margin-left: 4px; margin-right: 8px; }
.tab-short + .rec + .tab-x { margin-left: 0; }
.tab-title-wide { width: 176px; margin-left: 0; letter-spacing: -.35px; -webkit-mask-image: linear-gradient(90deg, #000 90%, transparent); mask-image: linear-gradient(90deg, #000 90%, transparent); }
.tab-x { width: 14px; height: 14px; margin-left: 6px; color: #222; }
.tab-active .tab-x { margin-left: 6px; }
.amp-fav { width: 22px; font: italic 700 20px/1 "Liberation Serif", serif; color: #111; margin-right: 4px; text-align: center; }
.newtab { width: 44px; height: 34px; display: flex; align-items: center; justify-content: center; font: 400 24px/1 "Open Sans", sans-serif; color: #222; }
.win-ctrl { position: absolute; left: 730px; top: 0; height: 34px; display: flex; align-items: center; width: 184px; color: #222; }
.win-ctrl > * { margin-left: 0; }
.ctrl-chev { width: 10px; height: 7px; margin-left: 0; }
.ctrl-min { width: 10px; height: 1.500px; background: currentColor; margin-left: 36px; }
.ctrl-max { width: 10px; height: 12px; border: 1.500px solid currentColor; margin-left: 36px; }
.ctrl-close { width: 12px; height: 12px; margin-left: 34px; }
.win-ctrl-dim { color: #3f8d94; opacity: .8; left: 786px; }

.toolbar { height: 36px; flex: none; background: #b6e0e4; display: flex; align-items: center; padding-left: 12px; border-bottom: 1px solid #8fb3b7; color: #222; }
.tb-btn { width: 20px; height: 20px; margin-right: 12px; }
.tb-dim { color: #6b8f93; }
.omnibox { width: 680px; height: 27px; margin-left: -1px; margin-right: 13px; border-radius: 14px; background: #eaf7f8; display: flex; align-items: center; padding-left: 12px; }
.omnibox-r { width: 738px; margin-right: 11px; }
.omni-lock { width: 13px; height: 13px; color: #444; margin-right: 9px; }
.omni-url { font: 14.300px/1 "Roboto", sans-serif; color: #555; flex: 1; white-space: nowrap; overflow: hidden; }
.omni-url-r { font-size: 13.800px; }
.omni-url b { font-weight: 400; color: #1f1f1f; }
.omni-ic { width: 17px; height: 17px; color: #444; margin-right: 15px; }
.omni-last { margin-right: 10px; }
.omni-tr { color: #444; }
.tb-ext { width: 20px; height: 20px; margin-right: 12px; color: #1a1a1a; }
.avatar-sm { width: 22px; height: 22px; border-radius: 50%; background: #8d6e63; color: #fff; font: 11px/22px "Roboto", sans-serif; text-align: center; flex: none; }
.tb-dots { width: 20px; height: 20px; margin-left: 11px; flex: none; }

.page { flex: 1; display: flex; min-height: 0; }
.gt { flex: 1; min-width: 0; display: flex; flex-direction: column; font-family: "Roboto", sans-serif; }
.vscroll { width: 17px; background: #f1f1f1; position: relative; flex: none; display: flex; flex-direction: column; justify-content: space-between; align-items: center; padding: 7px 0; }
.sb-up { border: 4px solid transparent; border-top: 0; border-bottom: 6px solid #a8a8a8; }
.sb-down { border: 4px solid transparent; border-bottom: 0; border-top: 6px solid #a8a8a8; }

.gt-head { height: 65px; flex: none; display: flex; align-items: center; padding: 2px 0 0 24px; border-bottom: 1px solid #e0e0e0; }
.gt-burger { width: 24px; height: 24px; color: #5f6368; margin-top: -1px; }
.gt-logo { margin-left: 15px; font: 500 24px/1 "Lato", sans-serif; flex: 1; letter-spacing: -.1px; }
.c-b { color: #4285f4; } .c-r { color: #ea4335; } .c-y { color: #fbbc05; } .c-g { color: #34a853; }
.gt-dich { color: #5f6368; font-size: 23px; font-weight: 400; margin-left: -2px; letter-spacing: -.4px; }
.gt-apps { width: 24px; height: 24px; color: #5f6368; margin: -1px 20px 0 0; }
.avatar-lg { width: 32px; height: 32px; border-radius: 50%; background: #8d6e63; color: #fff; font: 16px/32px "Roboto", sans-serif; text-align: center; margin: -1px 18px 0 0; }

.gt-modes { height: 56px; flex: none; background: #fafafa; border-bottom: 1px solid #e0e0e0; display: flex; align-items: center; padding: 2px 0 0 12px; gap: 8px; }
.mode { height: 36px; display: flex; align-items: center; padding-left: 11px; border: 1px solid #dadce0; border-radius: 4px; font: 400 14.500px/1 "Roboto", sans-serif; color: #1a73e8; }
.mode-on { width: 108px; background: #e6ecf8; }
.mode-off { width: 99px; background: #fff; padding-left: 12px; }
.mode-ic { width: 20px; height: 20px; margin-right: 6px; }
.mode-ic-doc { width: 20px; height: 20px; margin-right: 5px; }

.gt-langs { height: 49px; flex: none; display: flex; align-items: stretch; border-bottom: 1px solid #e0e0e0; position: relative; }
.langs-src { width: 424px; display: flex; align-items: center; padding-left: 16px; }
.langs-dst { flex: 1; display: flex; align-items: center; padding-left: 0; }
.lang { font: 500 14.300px/1 "Roboto", sans-serif; color: #5f6368; white-space: nowrap; display: flex; align-items: center; height: 100%; padding-top: 2px; }
.lang-detect { width: 167px; }
.lang-on { color: #1a73e8; border-bottom: 3px solid #1a73e8; padding-top: 5px; }
.lang-anh { width: 62px; justify-content: center; }
.lang-cell { width: 62px; justify-content: center; }
.langs-src .lang-fade { width: 34px; margin-left: 16px; overflow: hidden; color: #5f6368; -webkit-mask-image: linear-gradient(90deg, #000 50%, transparent); mask-image: linear-gradient(90deg, #000 50%, transparent); }
.lang-chev { width: 22px; height: 22px; margin-left: 12px; color: #5f6368; }
.lang-swap { width: 24px; height: 24px; align-self: center; color: #5f6368; margin-left: 4px; }
.langs-dst { padding-left: 12px; }
.lang-zh { width: 124px; margin-left: 17px; }
.lang-chev2 { width: 22px; height: 22px; margin-left: 53px; color: #5f6368; }

.gt-panels { height: 517px; flex: none; display: flex; box-shadow: 0 2px 2px rgba(0, 0, 0, .2); position: relative; }
.pane { display: flex; flex-direction: column; }
.pane-src { width: 439px; border-right: 1px solid #e0e0e0; background: #fff; }
.pane-dst { flex: 1; background: #f5f5f5; }
.pane-body { flex: 1; display: flex; justify-content: space-between; padding: 21px 0 0 24px; }
.pane-dst .pane-body { padding-left: 25px; }
.pane-text { font: 400 18px/28px "Roboto", sans-serif; color: #3c4043; white-space: nowrap; }
.pane-text-dst { color: #202124; }
.caret { display: inline-block; width: 1px; height: 21px; background: #222; vertical-align: -5px; }
.pane-x { width: 24px; height: 24px; margin: 4px 19px 0 0; color: #5f6368; }
.pane-star { width: 24px; height: 24px; margin: 4px 20px 0 0; color: #5f6368; }
.pane-foot { height: 64px; flex: none; display: flex; align-items: center; padding-left: 23px; color: #5f6368; }
.foot-ic { width: 24px; height: 24px; }
.foot-vol { margin-left: 25px; }
.counter { font: 12px/1 "Roboto", sans-serif; color: #70757a; margin-left: 199px; width: 76px; }
.kbd { width: 17px; height: 11px; margin-left: 5px; }
.kbd-caret { border: 4px solid transparent; border-bottom: 0; border-top: 4px solid #5f6368; margin-left: 8px; margin-top: -4px; }
.pane-foot-dst { padding-left: 24px; }
.foot-copy { margin-left: 248px; }
.foot-edit { margin-left: 24px; }
.foot-share { margin-left: 24px; }

.gt-below { flex: 1; min-height: 0; background: #fff; display: flex; flex-direction: column; }
.gt-feedback { font: italic 400 11px/1 "Roboto", sans-serif; color: #70757a; text-align: right; padding: 9px 11px 0 0; }
.gt-hub { display: flex; justify-content: center; margin-top: 73px; }
.hub { width: 134px; display: flex; flex-direction: column; align-items: center; }
.hub-circle { width: 72px; height: 72px; border-radius: 50%; border: 1px solid #dadce0; display: flex; align-items: center; justify-content: center; color: #5f6368; }
.hub-ic { width: 30px; height: 30px; }
.hub-label { margin-top: 9px; font: 14px/16px "Roboto", sans-serif; color: #70757a; }

/* write & improve */
.site-head { height: 55px; flex: none; background: #fff; display: flex; align-items: center; padding-left: 21px; position: relative; z-index: 1; box-shadow: 0 2px 5px rgba(0, 0, 0, .45); font-family: "Open Sans", sans-serif; }
.site-logo { width: 158px; display: flex; flex-direction: column; align-items: flex-end; padding-top: 2px; }
.logo-main { font: 600 23.500px/24px "Open Sans", sans-serif; letter-spacing: -1.300px; white-space: nowrap; }
.logo-w { color: #3a3a3a; }
.logo-i { color: #0a8282; }
.logo-sub { font: 600 8.500px/9px "Open Sans", sans-serif; color: #4a4a4a; margin-top: -1px; letter-spacing: -.2px; }
.logo-sub small { font-size: 6px; }
.site-back { display: flex; align-items: center; margin-left: 36px; font-size: 14.500px; font-weight: 500; color: #2c2c2c; flex: none; width: 543px; white-space: nowrap; }
.site-arrow { width: 18px; height: 18px; margin-right: 7px; color: #555; }
.site-social { width: 85px; height: 100%; border: solid #e8e8e8; border-width: 0 1px; display: flex; align-items: center; justify-content: center; gap: 15px; color: #222; flex: none; }
.soc-ic { width: 18px; height: 18px; }
.site-out { display: flex; align-items: center; margin-left: 18px; font-size: 14.500px; color: #2c2c2c; white-space: nowrap; }
.out-ic { width: 15px; height: 17px; margin-right: 6px; color: #666; }

.site-body { flex: 1; display: flex; min-height: 0; }
.site-side { width: 40px; flex: none; background: #2a2a2a; padding: 13px 0 0 10px; }
.side-burger { width: 20px; height: 14px; }
.site-main { flex: 1; min-width: 0; background: #edf3f3; padding: 0 40px 0 15px; overflow: hidden; }
.etn { font: 500 20px/50px "Open Sans", sans-serif; height: 50px; color: #222; }
.card { background: #fff; border: 1px solid #0a8282; border-top: 5px solid #2a2a2a; box-shadow: 0 3px 6px rgba(0, 0, 0, .2); width: 865px; }
.card-title { height: 60px; padding-left: 15px; border-bottom: 1px solid #0a8282; font: 500 20.700px/59px "Open Sans", sans-serif; color: #2a2a2a; }
.prompt { height: 79px; padding: 17px 0 0 15px; border-bottom: 1px solid #0a8282; font: 300 14px/18px "Open Sans", sans-serif; color: #555; }
.note { height: 31px; padding-left: 10px; border-bottom: 1px solid #0a8282; font: italic 400 11px/32px "Open Sans", sans-serif; color: #222; }
.essay { height: 354px; padding: 0 15px; background: repeating-linear-gradient(135deg, #e3f6f6 0 1px, #f2fbfb 1px 3px); }
.essay-top { height: 42px; display: flex; justify-content: space-between; align-items: center; padding-top: 8px; font-size: 14px; }
.start { display: flex; align-items: center; font-size: 15px; font-weight: 500; color: #2a2a2a; }
.trash { width: 15px; height: 18px; margin-left: 4px; }
.saved { display: flex; align-items: center; color: #444; }
.cloud { width: 16px; height: 12px; margin-right: 5px; }
.essay-box { height: 219px; border: 1px solid #5fb5b5; border-bottom: 0; background: #fff; display: flex; overflow: hidden; }
.essay-text { flex: 1; min-width: 0; margin-top: -16px; padding-left: 5px; font: 400 12.500px/20.900px "Open Sans", sans-serif; color: #444; }
.sel { display: block; width: fit-content; height: 20.900px; white-space: nowrap; background: #c8c8c8; padding-right: 7px; }
.sel-end { padding-right: 0; }
.essay-scroll { width: 17px; flex: none; background: #f1f1f1; position: relative; display: flex; flex-direction: column; align-items: center; padding-top: 8px; }
.es-up { border: 4px solid transparent; border-top: 0; border-bottom: 5px solid #444; }
.es-thumb { width: 13px; height: 140px; background: #bdbdbd; margin-top: 26px; }
.es-down { border: 4px solid transparent; border-bottom: 0; border-top: 5px solid #a8a8a8; margin-top: 5px; }
.es-grip { position: absolute; right: 1px; bottom: 1px; width: 9px; height: 9px; background: repeating-linear-gradient(135deg, transparent 0 2px, #555 2px 3px); }
.wordcount { height: 30px; background: #fdcb4f; border-radius: 0 0 0 8px; padding-left: 10px; font: 700 14px/30px "Open Sans", sans-serif; color: #222; }
.essay-actions { display: flex; justify-content: flex-end; padding: 15px 2px 0 0; }
.btn-check { width: 225px; height: 34px; background: #0a8282; color: #fff; font: 600 20px/33px "Open Sans", sans-serif; display: flex; align-items: center; justify-content: center; clip-path: polygon(19px 0, 100% 0, 206px 100%, 0 100%); padding: 0 5px 2px 0; }
.btn-arrow { width: 24px; height: 17px; margin-left: 3px; }
.back-link { height: 41px; display: flex; align-items: flex-end; font-size: 13.500px; color: #2a2a2a; padding-bottom: 1px; }
.back-arrow { width: 14px; height: 14px; margin: 0 3px 3px 0; color: #666; }
.card-help { border-bottom: 0; height: 222px; }
.help-head { height: 66px; display: flex; align-items: stretch; border-bottom: 1px solid #0a8282; }
.help-title { font: 500 20.800px/60px "Open Sans", sans-serif; padding-left: 15px; width: 534px; color: #222; }
.help-btns { display: flex; padding-top: 25px; width: 269px; }
.btn-skew { height: 26px; padding-bottom: 1px; color: #fff; background: #0a8282; display: flex; align-items: center; justify-content: center; font: 600 16px/1 "Open Sans", sans-serif; clip-path: polygon(15px 0, 100% 0, calc(100% - 15px) 100%, 0 100%); }
.btn-hist { width: 137px; }
.btn-help { width: 116px; }
.btn-ic { width: 20px; height: 20px; margin-right: 2px; }
.btn-q { width: 17px; height: 17px; margin-right: 4px; }
.help-level { width: 60px; border-left: 1px solid #0a8282; display: flex; flex-direction: column; align-items: center; padding-top: 16px; font-size: 12px; line-height: 17px; }
.help-level b { font-weight: 600; }
.help-tabs { height: 31px; background: #b0d9d9; border-bottom: 1px solid #5fb5b5; display: flex; font-size: 14px; color: #2f3d3d; position: relative; }
.htab { display: flex; align-items: center; padding: 0 15px; height: 31px; }
.htab-off { color: #7c9c9c; width: 81px; justify-content: center; }
.htab-on { width: 95px; justify-content: center; background: #fff; color: #222; border-left: 1px solid #5fb5b5; border-right: 1px solid #5fb5b5; position: relative; margin-bottom: 0; }
.htab-on::after { content: ""; position: absolute; left: 42px; bottom: -4px; width: 8px; height: 8px; background: #fff; border: solid #5fb5b5; border-width: 0 1px 1px 0; transform: rotate(45deg); }
.help-body { padding: 22px 15px 0; background: #fff; }
.fb-box { width: 832px; height: 120px; border: 1px solid #0a8282; border-bottom: 0; box-shadow: 0 -1px 4px rgba(0, 0, 0, .2); padding: 8px 0 0 15px; }
.fb-row { display: flex; }
.fb-amp { width: 56px; height: 56px; font: italic 700 74px/56px "Liberation Serif", serif; color: #111; flex: none; position: relative; }
.fb-arrow { position: absolute; right: -2px; top: 14px; width: 26px; height: 26px; }
.fb-text { margin-left: 12px; padding-top: 3px; font: italic 500 12.500px/17px "Open Sans", sans-serif; color: #222; white-space: nowrap; }
.fb-q { margin-top: 20px; font: italic 400 13px/16px "Open Sans", sans-serif; color: #444; }

/* taskbar */
.taskbar { position: absolute; left: 0; right: 0; bottom: 0; height: 48px; background: linear-gradient(90deg, #e9f1f7 0, #dbe5f4 28%, #d6e0f3 47%, #f8ecd0 52%, #f9edd0 100%); display: flex; justify-content: center; border-top: 1px solid rgba(255, 255, 255, .5); }
.tb-apps { display: flex; align-items: center; }
.app { width: 44px; height: 48px; display: flex; align-items: center; justify-content: center; position: relative; }
.app-ic { width: 24px; height: 24px; }
.ps-ic { width: 22px; height: 22px; background: #001e36; color: #31a8ff; border-radius: 2px; font: 600 13px/22px "Open Sans", sans-serif; text-align: center; }
.app-active { width: 40px; height: 42px; margin: 0 2px; background: rgba(255, 255, 255, .5); border-radius: 4px; box-shadow: 0 0 1px rgba(0, 0, 0, .25); }
.badge-l { position: absolute; width: 15px; height: 15px; border-radius: 50%; background: #8d6e63; color: #fff; font: 9px/15px "Roboto", sans-serif; text-align: center; }
.badge-l1 { right: 3px; top: 3px; width: 18px; height: 18px; line-height: 18px; }
.badge-l2 { right: 6px; bottom: 6px; }
.run-on { position: absolute; bottom: 0; left: 12px; width: 16px; height: 3px; border-radius: 2px; background: #0a6fd8; }
.run-dot { position: absolute; bottom: 2px; left: 20px; width: 5px; height: 3px; border-radius: 2px; background: #808080; }
.pdf-t { font: 700 6px "Open Sans", sans-serif; fill: #fff; text-anchor: middle; }
.tray { position: absolute; right: 0; top: 0; height: 47px; display: flex; align-items: center; color: #222; }
.tr-ic { height: 16px; }
.tr-up { width: 12px; height: 8px; }
.tr-mic { width: 20px; height: 22px; margin-left: 12px; }
.tr-lang { font: 11.500px/1 "Open Sans", sans-serif; margin-left: 16px; width: 26px; }
.tr-wifi { width: 17px; height: 14px; margin-left: 15px; }
.tr-vol { width: 17px; height: 15px; margin-left: 8px; }
.tr-bat { width: 17px; height: 15px; margin-left: 7px; }
.clock { display: flex; flex-direction: column; align-items: flex-end; width: 60px; margin-left: 6px; font: 11.500px/16px "Open Sans", sans-serif; color: #222; }
.notif { width: 17px; height: 17px; border-radius: 50%; background: #0b7ddc; color: #fff; font: 600 11px/17px "Open Sans", sans-serif; text-align: center; margin: 0 19px 0 7px; }
```
